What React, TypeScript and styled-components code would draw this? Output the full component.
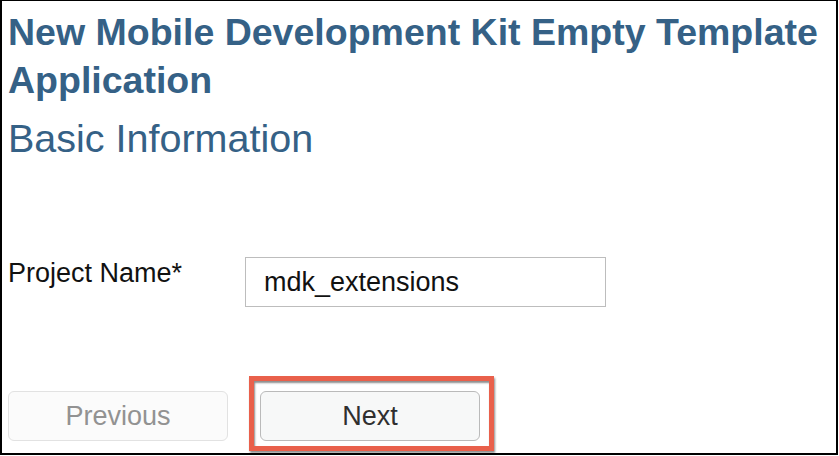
import React from "react";
import styled, { createGlobalStyle } from "styled-components";

const GlobalStyle = createGlobalStyle`
  html, body {
    margin: 0;
    padding: 0;
    background: #fff;
  }
  * {
    box-sizing: border-box;
  }
`;

const colors = {
  title: "#356186",
  text: "#111",
  inputBorder: "#bdbdbd",
  highlight: "#e9604b",
};

const Frame = styled.div`
  width: 838px;
  height: 455px;
  border: 2px solid #000;
  border-top-width: 1px;
  padding: 7px 0 0 6px;
  font-family: "Liberation Sans", Arial, sans-serif;
  background: #fff;
  overflow: hidden;
`;

const Title = styled.h1`
  margin: 0;
  font-size: 37.5px;
  line-height: 48px;
  font-weight: 700;
  color: ${colors.title};
`;

const Subtitle = styled.h2`
  margin: 10px 0 0;
  font-size: 39.5px;
  line-height: 48px;
  font-weight: 400;
  color: ${colors.title};
`;

const FormRow = styled.div`
  display: flex;
  align-items: flex-start;
  margin-top: 95px;
`;

const Label = styled.label`
  width: 237px;
  padding: 1px 0 0 0;
  font-size: 27px;
  color: ${colors.text};
`;

const TextInput = styled.input`
  width: 361px;
  height: 50px;
  border: 1.5px solid ${colors.inputBorder};
  border-radius: 0;
  padding: 0 0 0 18px;
  font-family: "Liberation Sans", Arial, sans-serif;
  font-size: 27px;
  color: ${colors.text};
  background: #fff;
  outline: none;
`;

const ButtonRow = styled.div`
  display: flex;
  gap: 32px;
  margin-top: 84px;
`;

const Highlight = styled.div`
  position: relative;
`;

const HighlightBox = styled.div`
  position: absolute;
  left: -11px;
  top: -15px;
  width: 245px;
  height: 75px;
  border: 5px solid ${colors.highlight};
  box-shadow: 1px 2px 2px rgba(0, 0, 0, 0.45),
    inset 1px 2px 2px rgba(0, 0, 0, 0.45);
  pointer-events: none;
`;

const Button = styled.button<{ $disabled?: boolean }>`
  width: 220px;
  height: 50px;
  border-radius: 6px;
  border: ${(p) => (p.$disabled ? "1.5px solid #e2e2e2" : "1.5px solid #bababa")};
  background: ${(p) => (p.$disabled ? "#fbfbfb" : "#f7f8f8")};
  color: ${(p) => (p.$disabled ? "#929292" : "#2f2f2f")};
  font-family: "Liberation Sans", Arial, sans-serif;
  font-size: 27px;
  padding: 0;
  cursor: ${(p) => (p.$disabled ? "default" : "pointer")};
`;

export default function App() {
  return (
    <>
      <GlobalStyle />
      <Frame>
        <Title>
          New Mobile Development Kit Empty Template
          <br />
          Application
        </Title>
        <Subtitle>Basic Information</Subtitle>
        <FormRow>
          <Label htmlFor="projectName">Project Name*</Label>
          <TextInput id="projectName" defaultValue="mdk_extensions" />
        </FormRow>
        <ButtonRow>
          <Button $disabled>Previous</Button>
          <Highlight>
            <Button>Next</Button>
            <HighlightBox />
          </Highlight>
        </ButtonRow>
      </Frame>
    </>
  );
}
